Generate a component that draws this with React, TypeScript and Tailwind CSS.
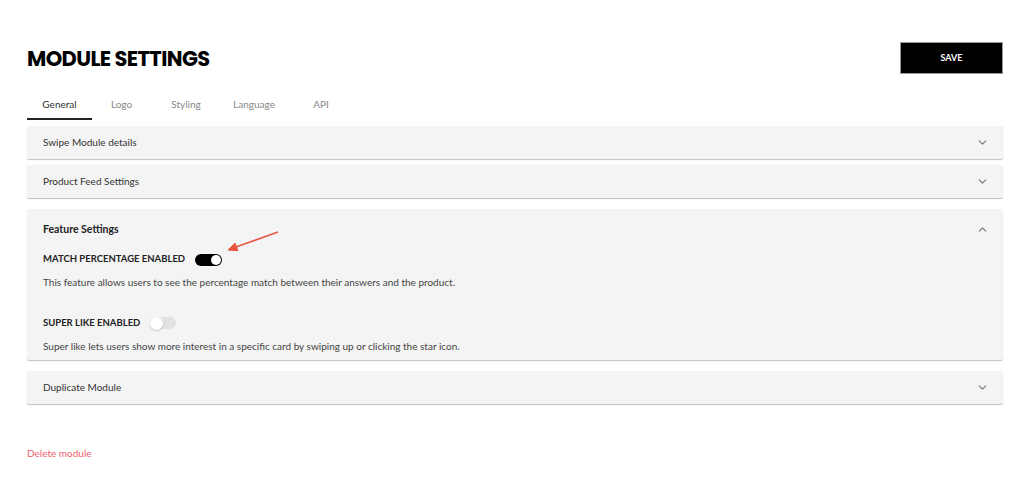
import { ChevronDown, ChevronUp } from 'lucide-react';

const tabs = [
    { label: 'General', w: 'w-[65px]', active: true },
    { label: 'Logo', w: 'w-[59px]' },
    { label: 'Styling', w: 'w-[70px]' },
    { label: 'Language', w: 'w-[66px]' },
    { label: 'API', w: 'w-[68px]' },
];

function Toggle({ on }: { on: boolean }) {
    return on ? (
        <div className="w-[27px] h-[12px] rounded-full bg-black flex items-center justify-end pr-[1px]">
            <div className="w-[10px] h-[10px] rounded-full bg-white"></div>
        </div>
    ) : (
        <div className="w-[26px] h-[12px] rounded-full bg-[#e2e2e2] flex items-center">
            <div className="w-[13px] h-[13px] rounded-full bg-white shadow-[0_1px_2px_rgba(0,0,0,0.2)]"></div>
        </div>
    );
}

function Collapsed({ title, className = '' }: { title: string; className?: string }) {
    return (
        <div className={`bg-[#f4f4f4] h-[33px] flex items-center justify-between pl-4 pr-[14px] shadow-[0_1px_1px_rgba(0,0,0,0.25)] rounded-[2px] ${className}`}>
            <span className="text-[10px] text-[#333]">{title}</span>
            <ChevronDown size={13} strokeWidth={2} className="text-[#777]" />
        </div>
    );
}

export default function App() {
    return (
        <div className="w-[1024px] h-[484px] bg-white pl-[27px] pr-[21px] pt-[42px] font-['Lato',sans-serif] overflow-hidden">
            <div className="flex items-center justify-between h-8">
                <h1 className="font-['Poppins','Inter',sans-serif] font-bold text-[21px] tracking-[-0.6px] text-black leading-none">
                    MODULE SETTINGS
                </h1>
                <button className="w-[103px] h-8 bg-black border border-[#999] text-white text-[9px] font-bold">
                    SAVE
                </button>
            </div>

            {/* Tabs */}
            <div className="flex mt-4 h-[30px]">
                {tabs.map((t) => (
                    <div
                        key={t.label}
                        className={`${t.w} flex items-center justify-center text-[10px] border-b-2 ${
                            t.active ? 'text-[#333] border-[#222]' : 'text-[#888] border-transparent'
                        }`}
                    >
                        {t.label}
                    </div>
                ))}
            </div>

            <div className="mt-[6px]">
                <Collapsed title="Swipe Module details" />
                <Collapsed title="Product Feed Settings" className="mt-[6px]" />

                {/* Expanded panel */}
                <div className="bg-[#f4f4f4] mt-[11px] h-[151px] pl-4 pr-[14px] pt-[13px] shadow-[0_1px_1px_rgba(0,0,0,0.25)] rounded-[2px]">
                    <div className="flex items-center justify-between h-[15px]">
                        <span className="text-[10.5px] font-bold text-[#222]">Feature Settings</span>
                        <ChevronUp size={13} strokeWidth={2} className="text-[#777]" />
                    </div>
                    <div className="relative flex items-center gap-[10px] mt-[16px] h-[13px]">
                        <span className="text-[9.5px] font-bold text-[#222]">MATCH PERCENTAGE ENABLED</span>
                        <Toggle on />
                        <svg className="absolute left-[183px] top-[-24px]" width="56" height="26" viewBox="0 0 56 26">
                            <line x1="52" y1="3" x2="10" y2="18" stroke="#e8553f" strokeWidth="1.6" />
                            <path d="M2 21 L11.8 21.7 L9.1 14.2 Z" fill="#e8553f" stroke="#e8553f" strokeWidth="1" strokeLinejoin="round" />
                        </svg>
                    </div>
                    <p className="text-[10px] text-[#444] mt-[9px]">
                        This feature allows users to see the percentage match between their answers and the product.
                    </p>
                    <div className="flex items-center gap-[10px] mt-[26px] h-[14px]">
                        <span className="text-[9.5px] font-bold text-[#222]">SUPER LIKE ENABLED</span>
                        <Toggle on={false} />
                    </div>
                    <p className="text-[10px] text-[#444] mt-[9px]">
                        Super like lets users show more interest in a specific card by swiping up or clicking the star icon.
                    </p>
                </div>

                <Collapsed title="Duplicate Module" className="mt-[11px]" />
            </div>

            <div className="mt-[42px] text-[10px] text-[#f0616d]">Delete module</div>
        </div>
    );
}
